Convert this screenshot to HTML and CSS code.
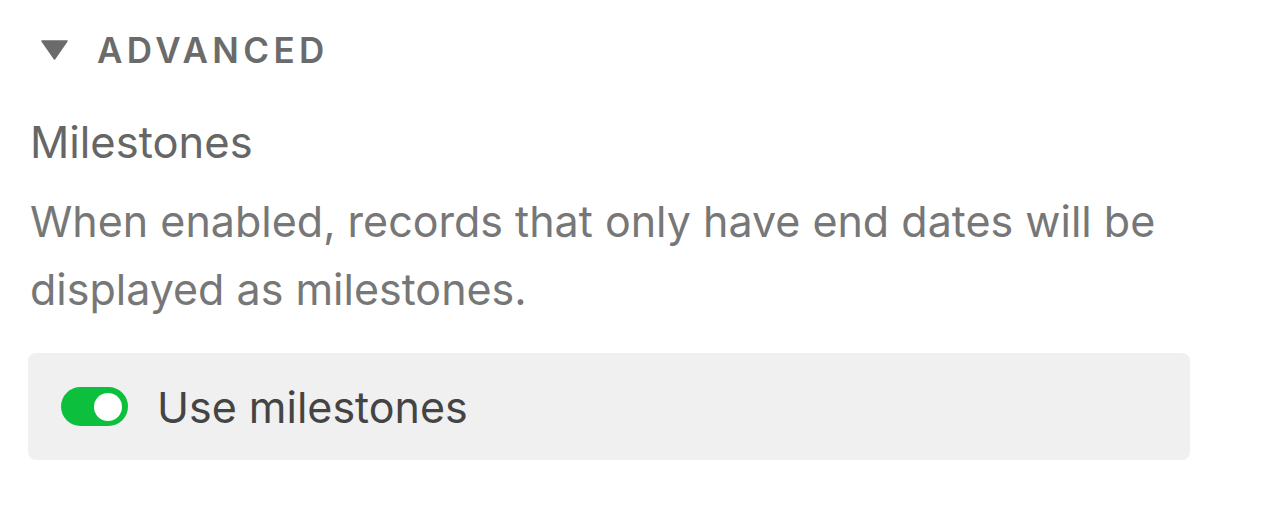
FILE: index.html
```html
<!DOCTYPE html>
<html lang="en">
<head>
<meta charset="utf-8">
<title>Advanced</title>
<link rel="stylesheet" href="styles.css">
</head>
<body>
<section class="panel">
  <div class="section-header">
    <svg class="caret" width="27" height="20" viewBox="0 0 27 20" aria-hidden="true">
      <path d="M1 1 H26 L13.5 19 Z" fill="#6b6b6b" stroke="#6b6b6b" stroke-width="1.5" stroke-linejoin="round"/>
    </svg>
    <span class="section-title">ADVANCED</span>
  </div>
  <div class="setting">
    <div class="setting-title">Milestones</div>
    <p class="setting-desc">When enabled, records that only have end dates will be displayed as milestones.</p>
    <label class="toggle-row">
      <span class="toggle on"><span class="knob"></span></span>
      <span class="toggle-label">Use milestones</span>
    </label>
  </div>
</section>
</body>
</html>
```

FILE: styles.css
```css
html, body {
  margin: 0;
  background: #ffffff;
}
body {
  font-family: Inter, "Noto Sans", "Liberation Sans", sans-serif;
}
.panel {
  width: 1162px;
  padding: 28px 0 0 28px;
}
.section-header {
  display: flex;
  align-items: center;
  height: 44px;
  padding-left: 13px;
}
.caret {
  display: block;
}
.section-title {
  margin-left: 29px;
  font-size: 35px;
  font-weight: 600;
  letter-spacing: 4.4px;
  color: #6b6b6b;
  line-height: 44px;
}
.setting {
  margin-top: 42px;
}
.setting-title {
  padding-left: 2px;
  font-size: 43.5px;
  line-height: 56px;
  color: #666666;
  font-weight: 430;
}
.setting-desc {
  margin: 17px 0 0 0;
  padding-left: 2px;
  font-size: 43px;
  line-height: 68px;
  color: #777777;
  width: 1150px;
}
.toggle-row {
  margin-top: 30px;
  display: flex;
  align-items: center;
  height: 107px;
  background: #f0f0f0;
  border-radius: 8px;
  padding-left: 33px;
}
.toggle {
  position: relative;
  width: 67px;
  height: 39px;
  border-radius: 20px;
  background: #0cbf3c;
  flex: none;
}
.knob {
  position: absolute;
  right: 6px;
  top: 5.5px;
  width: 28px;
  height: 28px;
  border-radius: 50%;
  background: #ffffff;
}
.toggle-label {
  margin-left: 29px;
  font-size: 43px;
  color: #444444;
}
```
